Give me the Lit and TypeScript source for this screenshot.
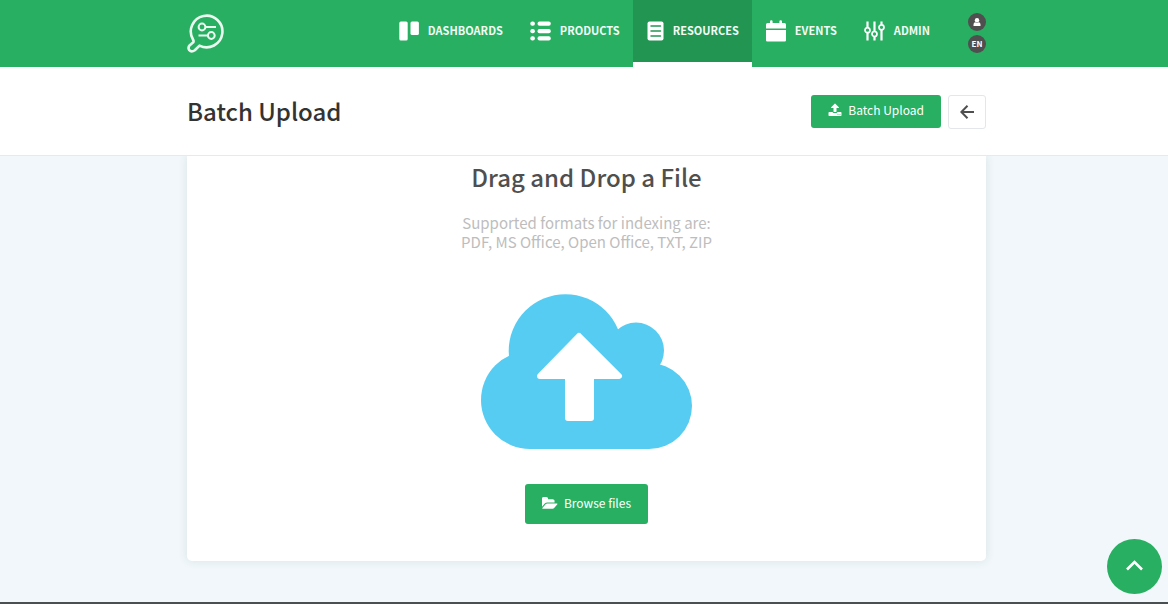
import { LitElement, html, svg, css } from "lit";
import { customElement } from "lit/decorators.js";

const icons = {
  dashboards: svg`<svg width="20" height="20" viewBox="0 0 20 20" fill="currentColor"><rect x="0.300" y="0.500" width="8.400" height="19" rx="1.500"/><rect x="11.500" y="0.500" width="8.400" height="13.500" rx="1.500"/></svg>`,
  products: svg`<svg width="21" height="20" viewBox="0 0 21 20" fill="currentColor"><rect x="0.300" y="0.500" width="4.600" height="4.300" rx="2"/><rect x="7.500" y="0.500" width="13.300" height="4.300" rx="2"/><rect x="0.300" y="7.900" width="4.600" height="4.300" rx="2"/><rect x="7.500" y="7.900" width="13.300" height="4.300" rx="2"/><rect x="0.300" y="15.200" width="4.600" height="4.300" rx="2"/><rect x="7.500" y="15.200" width="13.300" height="4.300" rx="2"/></svg>`,
  resources: svg`<svg width="17" height="20" viewBox="0 0 17 20"><rect x="0.500" y="0.500" width="16" height="19" rx="2" fill="currentColor"/><path d="M4 5h9.500M4 10h9.500M4 15h9.500" stroke="#239553" stroke-width="1.500" stroke-linecap="round"/></svg>`,
  events: svg`<svg width="20" height="22" viewBox="0 0 20 22" fill="currentColor"><path d="M1.500 3H4V1.500a1.300 1.300 0 0 1 2.600 0V3h6.800V1.500a1.300 1.300 0 0 1 2.600 0V3h2.500A1.500 1.500 0 0 1 20 4.500V8.500H0v-4A1.500 1.500 0 0 1 1.500 3zM0 10h20v10.200a1.300 1.300 0 0 1-1.300 1.300H1.300A1.300 1.300 0 0 1 0 20.200z"/></svg>`,
  admin: svg`<svg width="21" height="20" viewBox="0 0 21 20" fill="none" stroke="currentColor" stroke-width="1.700"><path d="M3.500 0.500V6.500M3.500 12v7.500M10.500 0.500v9.700M10.500 15.700v3.800M17.500 0.500v3M17.500 9v10.500" stroke-width="2.200"/><circle cx="3.500" cy="9.200" r="2.500"/><circle cx="10.500" cy="13" r="2.500"/><circle cx="17.500" cy="6.300" r="2.500"/></svg>`,
};

const entries = [
  { id: "dashboards", label: "DASHBOARDS", icon: icons.dashboards },
  { id: "products", label: "PRODUCTS", icon: icons.products },
  { id: "resources", label: "RESOURCES", icon: icons.resources, active: true },
  { id: "events", label: "EVENTS", icon: icons.events },
  { id: "admin", label: "ADMIN", icon: icons.admin },
];

@customElement("app-root")
export class AppRoot extends LitElement {
  static styles = css`
    :host {
      display: flex;
      flex-direction: column;
      min-height: 100vh;
      background: #f1f7fa;
      font-family: "Noto Sans CJK JP", "Noto Sans CJK SC", "Open Sans", sans-serif;
      color: #4f4f4f;
    }
    * { box-sizing: border-box; }
    h1, h2, p { margin: 0; }
    svg { display: block; flex: none; }
    a { color: inherit; text-decoration: none; }
    button { font: inherit; cursor: pointer; }
    .wrap {
      width: 100%;
      max-width: 799px;
      margin: 0 auto;
    }
    .bar, .title, main { padding-left: 5px; }
    .bar { background: #28af61; color: #fff; }
    .bar .wrap { display: flex; align-items: stretch; height: 67px; }
    .logo { display: flex; align-items: center; margin-right: auto; padding-bottom: 2px; }
    nav { display: flex; }
    .item {
      display: flex;
      align-items: center;
      gap: 9px;
      padding: 0 13px 0 14px;
      border-bottom: 5px solid transparent;
      font-size: 11px;
      line-height: 16px;
      font-weight: 700;
      color: #f2fcf6;
    }
    .item span { padding-bottom: 2px; }
    .item svg { color: #fff; }
    .item.active { background: #239553; background-clip: padding-box; border-bottom-color: #fff; }
    .tools {
      display: flex;
      flex-direction: column;
      justify-content: center;
      gap: 4px;
      margin-left: 25px;
      padding-bottom: 2px;
    }
    .round {
      display: flex;
      align-items: center;
      justify-content: center;
      width: 18px;
      height: 18px;
      padding: 0;
      border: 0;
      border-radius: 50%;
      background: #4f4f4f;
      color: #fff;
      font-size: 8px;
      line-height: 18px;
      font-weight: 700;
    }
    .title { background: #fff; border-bottom: 1px solid #e6eaee; }
    .title .wrap { display: flex; align-items: flex-start; gap: 7px; padding: 28px 0 26px; }
    h1 {
      margin-right: auto;
      font-size: 24px;
      line-height: 32px;
      font-weight: 500;
      color: #333;
    }
    .btn {
      display: flex;
      align-items: center;
      gap: 6px;
      height: 33px;
      padding: 0 17px 3px;
      border: 0;
      border-radius: 3px;
      background: #28af61;
      color: #fff;
      font-size: 12px;
      line-height: 18px;
    }
    .btn.large { height: 40px; padding-bottom: 2px; }
    .back {
      display: flex;
      align-items: center;
      justify-content: center;
      width: 38px;
      height: 34px;
      padding: 0;
      border: 1px solid #e3e6ea;
      border-radius: 3px;
      background: #fff;
      color: #4f4f4f;
    }
    main { flex: 1; padding-bottom: 41px; overflow: hidden; }
    .card {
      display: flex;
      flex-direction: column;
      align-items: center;
      padding: 5px 16px 37px;
      border-radius: 0 0 5px 5px;
      background: #fff;
      box-shadow: 0 0 10px rgba(60, 90, 110, 0.12);
      text-align: center;
    }
    h2 { font-size: 24px; line-height: 32px; font-weight: 500; color: #4f4f4f; }
    .formats { margin-top: 20px; font-size: 15px; line-height: 19px; color: #bdbdbd; }
    .cloud { margin: 43px 0 35px; }
    footer { height: 2px; background: #4a4f52; }
    .top {
      position: fixed;
      right: 6px;
      bottom: 10px;
      display: flex;
      align-items: center;
      justify-content: center;
      width: 55px;
      height: 55px;
      padding-bottom: 2px;
      border-radius: 50%;
      background: #28af61;
      color: #fff;
    }
  `;

  render() {
    return html`
      <header class="bar">
        <div class="wrap">
          <a class="logo" href="#" aria-label="Home">
            <svg width="38" height="40" viewBox="0 0 38 40" fill="none" stroke="#eafaf0">
              <path d="M6 26.500A15.800 15.800 0 1 1 12.500 32.600L7.800 37.200Q4.500 39.500 2.300 37.200Q0.500 34.800 2.800 32.200L6.300 29.300Q7 28.300 6 26.500Z" stroke-width="2.600" stroke-linejoin="round"/>
              <circle cx="15" cy="14" r="3.400" stroke-width="2"/><path d="M18.500 14h10.500M11.500 22.500h9" stroke-width="2"/><circle cx="24.300" cy="22.500" r="3.400" stroke-width="2"/>
            </svg>
          </a>
          <nav>
            ${entries.map((e) => html`<a class="item ${e.active ? "active" : ""}" href="#${e.id}">${e.icon}<span>${e.label}</span></a>`)}
          </nav>
          <div class="tools">
            <button class="round" aria-label="Account">
              <svg width="8" height="8" viewBox="0 0 8 8" fill="currentColor"><circle cx="4" cy="2.300" r="2.200"/><path d="M0.500 8V6.500Q0.500 4.200 2.500 4.200Q4 5.200 5.500 4.200Q7.500 4.200 7.500 6.500V8z"/></svg>
            </button>
            <button class="round">EN</button>
          </div>
        </div>
      </header>
      <section class="title">
        <div class="wrap">
          <h1>Batch Upload</h1>
          <button class="btn">
            <svg width="14" height="14" viewBox="64 0 1664 1792" fill="currentColor"><path d="M1344 1472q0-26-19-45t-45-19-45 19-19 45 19 45 45 19 45-19 19-45zm256 0q0-26-19-45t-45-19-45 19-19 45 19 45 45 19 45-19 19-45zm128-224v320q0 40-28 68t-68 28h-1472q-40 0-68-28t-28-68v-320q0-40 28-68t68-28h427q21 56 70.500 92t110.500 36h256q61 0 110.500-36t70.500-92h427q40 0 68 28t28 68zm-325-648q-17 40-59 40h-256v448q0 26-19 45t-45 19h-256q-26 0-45-19t-19-45v-448h-256q-42 0-59-40-17-39 14-69l448-448q18-19 45-19t45 19l448 448q31 30 14 69z"/></svg>
            <span>Batch Upload</span>
          </button>
          <button class="back" aria-label="Back">
            <svg width="14" height="14" viewBox="0 0 14 14" fill="none" stroke="currentColor" stroke-width="2"><path d="M14 7H1.500M7.500 0.800L1.300 7l6.200 6.200"/></svg>
          </button>
        </div>
      </section>
      <main>
        <div class="wrap card">
          <h2>Drag and Drop a File</h2>
          <p class="formats">Supported formats for indexing are:<br />PDF, MS Office, Open Office, TXT, ZIP</p>
          <svg class="cloud" width="211" height="155" viewBox="0 0 211 155">
            <g fill="#56ccf2">
              <circle cx="84.500" cy="57" r="56.800"/><circle cx="49" cy="106" r="49"/><circle cx="155" cy="56.500" r="28"/><circle cx="168" cy="112" r="43"/>
              <path d="M49 155V106L84 57L155 56L168 112V155z"/>
            </g>
            <path d="M98 42L138 82H110V124H87V82H59z" fill="#fff" stroke="#fff" stroke-width="6" stroke-linejoin="round"/>
          </svg>
          <button class="btn large">
            <svg width="16" height="15" viewBox="0 0 1856 1792" fill="currentColor"><path d="M1815 952q0 31-31 66l-336 396q-43 51-120.500 86.500t-143.500 35.500h-1088q-34 0-60.500-13t-26.500-43q0-31 31-66l336-396q43-51 120.500-86.500t143.500-35.500h1088q34 0 60.500 13t26.500 43zm-343-344v160h-832q-94 0-197 47.500t-164 119.500l-337 396-5 6q0-4-.5-12.500t-.5-12.500v-960q0-92 66-158t158-66h320q92 0 158 66t66 158v32h544q92 0 158 66t66 158z"/></svg>
            <span>Browse files</span>
          </button>
        </div>
      </main>
      <footer></footer>
      <a class="top" href="#" aria-label="Back to top">
        <svg width="17" height="11" viewBox="0 0 17 11" fill="none" stroke="currentColor" stroke-width="2.600"><path d="M1 9.500L8.500 2l7.500 7.500"/></svg>
      </a>
    `;
  }
}
